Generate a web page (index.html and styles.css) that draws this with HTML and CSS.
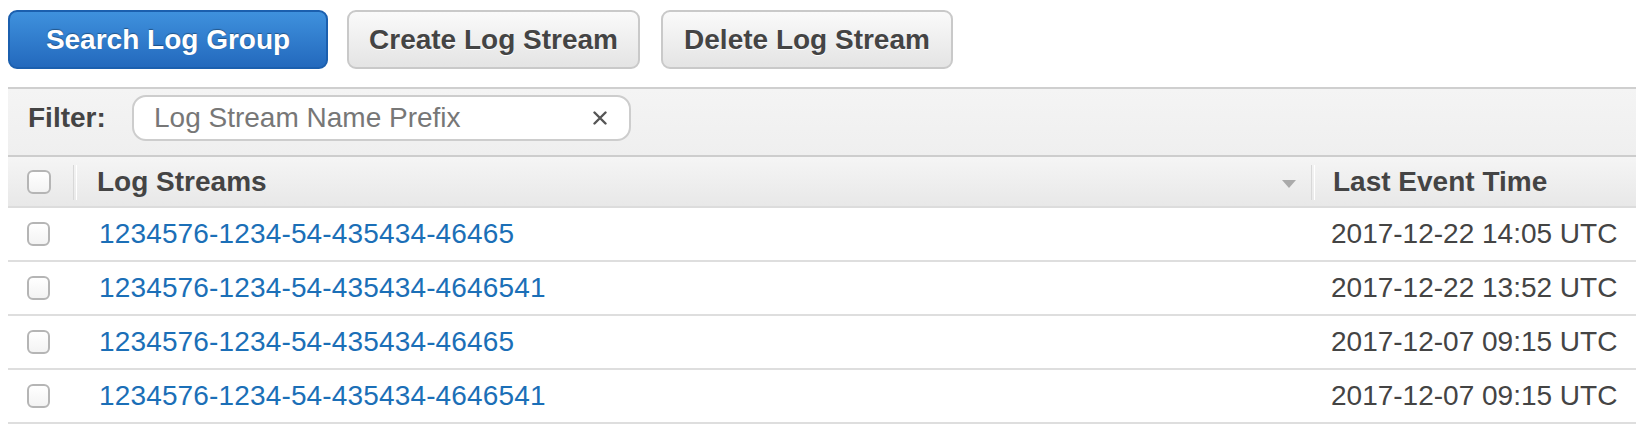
FILE: index.html
```html
<!DOCTYPE html>
<html lang="en">
<head>
<meta charset="utf-8">
<title>Log Streams</title>
<link rel="stylesheet" href="styles.css">
</head>
<body>
<div class="page">
  <div class="toolbar">
    <button class="btn btn-primary">Search Log Group</button>
    <button class="btn btn-default btn-create">Create Log Stream</button>
    <button class="btn btn-default">Delete Log Stream</button>
  </div>

  <div class="filter-bar">
    <span class="filter-label">Filter:</span>
    <div class="filter-box">
      <span class="placeholder">Log Stream Name Prefix</span>
      <svg class="clear" width="14" height="14" viewBox="0 0 14 14"><path d="M1.5 1.5 L12.5 12.5 M12.5 1.5 L1.5 12.5" stroke="#555" stroke-width="2.4" stroke-linecap="round" fill="none"/></svg>
    </div>
  </div>

  <div class="table">
    <div class="thead">
      <div class="th th-check"><span class="checkbox"></span></div>
      <div class="th th-name">
        <span>Log Streams</span>
        <svg class="sort" width="14" height="8" viewBox="0 0 14 8"><path d="M0 0 H14 L7 8 Z" fill="#aaa"/></svg>
      </div>
      <div class="th th-time"><span>Last Event Time</span></div>
    </div>

    <div class="tr">
      <div class="td td-check"><span class="checkbox"></span></div>
      <div class="td"><a class="link" href="#">1234576-1234-54-435434-46465</a></div>
      <div class="td td-time">2017-12-22 14:05 UTC</div>
    </div>
    <div class="tr">
      <div class="td td-check"><span class="checkbox"></span></div>
      <div class="td"><a class="link" href="#">1234576-1234-54-435434-4646541</a></div>
      <div class="td td-time">2017-12-22 13:52 UTC</div>
    </div>
    <div class="tr">
      <div class="td td-check"><span class="checkbox"></span></div>
      <div class="td"><a class="link" href="#">1234576-1234-54-435434-46465</a></div>
      <div class="td td-time">2017-12-07 09:15 UTC</div>
    </div>
    <div class="tr">
      <div class="td td-check"><span class="checkbox"></span></div>
      <div class="td"><a class="link" href="#">1234576-1234-54-435434-4646541</a></div>
      <div class="td td-time">2017-12-07 09:15 UTC</div>
    </div>
  </div>
</div>
</body>
</html>
```

FILE: styles.css
```css
* { box-sizing: border-box; }

html, body {
  margin: 0;
  padding: 0;
  background: #fff;
  font-family: "Liberation Sans", Arial, Helvetica, sans-serif;
  font-size: 28px;
  color: #444;
}

.page {
  padding-left: 8px;
}

.toolbar {
  display: flex;
  align-items: center;
  padding-top: 10px;
  height: 87px;
  padding-bottom: 18px;
}

.btn {
  height: 59px;
  font-family: inherit;
  font-size: 28px;
  font-weight: bold;
  border-radius: 9px;
  margin-right: 19px;
  cursor: pointer;
  line-height: 1;
}

.btn-primary {
  width: 320px;
  color: #fff;
  background: linear-gradient(#3f91dd, #2369bd);
  border: 2px solid #1b5fae;
  text-shadow: 0 -1px 1px rgba(0, 0, 0, 0.35);
}

.btn-default {
  width: 292px;
  color: #444;
  background: linear-gradient(#fafafa, #e4e4e4);
  border: 2px solid #c9c9c9;
  text-shadow: 0 1px 0 #fff;
}

.btn-create {
  width: 293px;
  margin-right: 21px;
}

.filter-bar {
  display: flex;
  align-items: flex-start;
  border-top: 2px solid #cfcfcf;
  background: linear-gradient(#f4f4f4, #efefef);
  padding: 6px 0 14px 20px;
  height: 68px;
}

.filter-label {
  font-weight: bold;
  color: #444;
  width: 104px;
  line-height: 46px;
}

.filter-box {
  width: 499px;
  height: 46px;
  border: 2px solid #cdcdcd;
  border-radius: 14px;
  background: #fff;
  display: flex;
  align-items: center;
  justify-content: space-between;
  padding: 0 22px 0 20px;
}

.placeholder {
  color: #777;
}

.clear {
  display: block;
}

.thead,
.tr {
  display: grid;
  grid-template-columns: 65px 1238px 1fr;
}

.thead {
  height: 53px;
  border-top: 2px solid #cdcdcd;
  border-bottom: 2px solid #dcdcdc;
  background: linear-gradient(#f5f5f5, #e8e8e8);
  font-weight: bold;
  color: #444;
}

.th {
  display: flex;
  align-items: center;
  position: relative;
}

.th-check {
  padding-left: 19px;
}

.th-name {
  padding: 0 15px 0 24px;
  justify-content: space-between;
}

.th-name::before,
.th-time::before {
  content: "";
  position: absolute;
  left: 0;
  top: 8px;
  bottom: 6px;
  width: 2px;
  border-left: 1px solid #d8d8d8;
  border-right: 1px solid #fff;
}

.th-name .sort {
  margin-top: 4px;
}

.th-time {
  padding-left: 22px;
}

.tr {
  height: 54px;
  border-bottom: 2px solid #dedede;
}

.td {
  display: flex;
  align-items: center;
  padding-left: 26px;
}

.td-check {
  padding-left: 19px;
}

.td-time {
  padding-left: 20px;
  color: #444;
}

.link {
  color: #1b6fb7;
  text-decoration: none;
  letter-spacing: 0.15px;
}

.checkbox {
  display: block;
  width: 24px;
  height: 24px;
  border: 2px solid #b5b5b5;
  border-radius: 6px;
  background: linear-gradient(#fff, #f3f3f3);
}

.td-check .checkbox {
  width: 23px;
  height: 24px;
}
```
